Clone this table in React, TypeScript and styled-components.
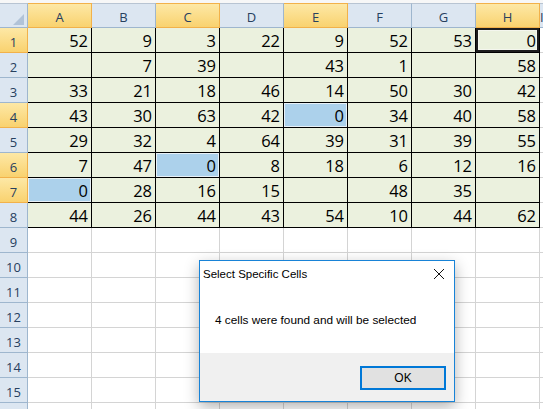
import React from 'react'
import styled, { createGlobalStyle, css } from 'styled-components'

const GlobalStyle = createGlobalStyle`
  html, body {
    margin: 0;
    padding: 0;
    background: #ffffff;
    overflow: hidden;
  }
`

const COLS = ['A', 'B', 'C', 'D', 'E', 'F', 'G', 'H']
const DATA: (number | '')[][] = [
  [52, 9, 3, 22, 9, 52, 53, 0],
  ['', 7, 39, '', 43, 1, '', 58],
  [33, 21, 18, 46, 14, 50, 30, 42],
  [43, 30, 63, 42, 0, 34, 40, 58],
  [29, 32, 4, 64, 39, 31, 39, 55],
  [7, 47, 0, 8, 18, 6, 12, 16],
  [0, 28, 16, 15, '', 48, 35, ''],
  [44, 26, 44, 43, 54, 10, 44, 62],
]
// 15 numbered rows, plus the top of row 16 peeking in at the bottom edge
const TOTAL_ROWS = 16
const LABELED_ROWS = 15
// found cells: `${row}-${colIndex}`
const FOUND = ['1-7', '4-4', '6-2', '7-0']
const ACTIVE = '1-7'
const SEL_COLS = [0, 2, 4, 7]
const SEL_ROWS = [1, 4, 6, 7]

const Page = styled.div`
  position: relative;
  width: 543px;
  height: 409px;
  overflow: hidden;
  background: #fff;
`

const TopStrip = styled.div`
  height: 3px;
  background: #f7f7f7;
`

const Sheet = styled.div`
  display: grid;
  grid-template-columns: 28px repeat(8, 64px) 1fr;
  grid-auto-rows: 25px;
`

const Corner = styled.div`
  box-sizing: border-box;
  background: #dce6f1;
  border-top: 1px solid #b8c4d2;
  border-right: 1px solid #9eb6ce;
  border-bottom: 1px solid #9eb6ce;
  display: flex;
  align-items: flex-end;
  justify-content: flex-end;
  padding: 0 3px 2px 0;
  svg {
    display: block;
  }
`

const headerSelected = css`
  background: linear-gradient(#fde8a6, #f9d26f);
  border-color: #f2b14a;
`

const ColHeader = styled.div<{ $sel?: boolean }>`
  box-sizing: border-box;
  background: #dce6f1;
  border-top: 1px solid #b8c4d2;
  border-right: 1px solid #9eb6ce;
  border-bottom: 1px solid #9eb6ce;
  font-family: 'Open Sans', 'Liberation Sans', sans-serif;
  font-size: 13px;
  color: #27405f;
  text-align: center;
  line-height: 27px;
  ${(p) => p.$sel && headerSelected}
`

const RowHeader = styled.div<{ $sel?: boolean }>`
  box-sizing: border-box;
  background: #dce6f1;
  border-right: 1px solid #9eb6ce;
  border-bottom: 1px solid #9eb6ce;
  font-family: 'Open Sans', 'Liberation Sans', sans-serif;
  font-size: 13px;
  color: #27405f;
  text-align: center;
  line-height: 28px;
  ${(p) => p.$sel && headerSelected}
`

const Cell = styled.div<{ $data?: boolean; $found?: boolean; $active?: boolean }>`
  box-sizing: border-box;
  background: ${(p) => (p.$data ? '#ebf1de' : '#ffffff')};
  border-right: 1px solid ${(p) => (p.$data ? '#000' : '#d4d4d4')};
  border-bottom: 1px solid ${(p) => (p.$data ? '#000' : '#d4d4d4')};
  font-family: 'Open Sans', 'Liberation Sans', sans-serif;
  font-size: 16.5px;
  color: #000;
  text-align: right;
  padding: 1px 3px 0 0;
  line-height: 23px;
  ${(p) =>
    p.$found &&
    css`
      background: #acd1eb;
      box-shadow: inset 0 0 0 1px #e8f1f7;
    `}
  ${(p) =>
    p.$active &&
    css`
      background: #ebf1de;
      box-shadow: inset 0 0 0 2px #1d1d1d, inset 0 0 0 3px #f4f6ee;
    `}
`

const Dialog = styled.div`
  position: absolute;
  left: 199px;
  top: 260px;
  width: 256px;
  height: 142px;
  box-sizing: border-box;
  border: 1px solid #1883d7;
  background: #fff;
  display: flex;
  flex-direction: column;
  box-shadow: 0 5px 14px rgba(0, 0, 0, 0.3);
  font-family: 'Liberation Sans', Arial, sans-serif;
  color: #000;
`

const TitleBar = styled.div`
  height: 25px;
  display: flex;
  align-items: center;
  justify-content: space-between;
  padding: 0 9px 0 3px;
  font-size: 11.5px;
`

const CloseButton = styled.div`
  width: 12px;
  height: 12px;
  display: flex;
  svg {
    display: block;
  }
`

const Body = styled.div`
  flex: 1;
  display: flex;
  align-items: center;
  padding-left: 15px;
  font-size: 11.8px;
`

const Footer = styled.div`
  height: 48px;
  box-sizing: border-box;
  background: #f0f0f0;
  display: flex;
  justify-content: flex-end;
  align-items: flex-start;
  padding: 13px 8px 0 0;
`

const OkButton = styled.button`
  width: 86px;
  height: 24px;
  box-sizing: border-box;
  border: 2px solid #0078d7;
  background: #e1e1e1;
  font-family: 'Liberation Sans', Arial, sans-serif;
  font-size: 12px;
  color: #000;
  padding: 0;
`

export default function App() {
  const rows = []
  for (let r = 1; r <= TOTAL_ROWS; r++) {
    const vals = DATA[r - 1]
    rows.push(
      <React.Fragment key={r}>
        <RowHeader $sel={SEL_ROWS.includes(r)}>
          {r <= LABELED_ROWS ? r : ''}
        </RowHeader>
        {COLS.map((_, c) => {
          const key = `${r}-${c}`
          return (
            <Cell
              key={key}
              $data={!!vals}
              $found={FOUND.includes(key) && key !== ACTIVE}
              $active={key === ACTIVE}
            >
              {vals ? vals[c] : ''}
            </Cell>
          )
        })}
        <Cell />
      </React.Fragment>
    )
  }

  return (
    <Page>
      <GlobalStyle />
      <TopStrip />
      <Sheet>
        <Corner>
          <svg width='11' height='11' viewBox='0 0 11 11'>
            <polygon points='11,0 11,11 0,11' fill='#b1c3d8' />
          </svg>
        </Corner>
        {COLS.map((c, i) => (
          <ColHeader key={c} $sel={SEL_COLS.includes(i)}>
            {c}
          </ColHeader>
        ))}
        <ColHeader>I</ColHeader>
        {rows}
      </Sheet>

      <Dialog>
        <TitleBar>
          <span>Select Specific Cells</span>
          <CloseButton>
            <svg width='12' height='12' viewBox='0 0 12 12'>
              <path d='M1 1 L11 11 M11 1 L1 11' stroke='#111' strokeWidth='1' />
            </svg>
          </CloseButton>
        </TitleBar>
        <Body>4 cells were found and will be selected</Body>
        <Footer>
          <OkButton>OK</OkButton>
        </Footer>
      </Dialog>
    </Page>
  )
}
